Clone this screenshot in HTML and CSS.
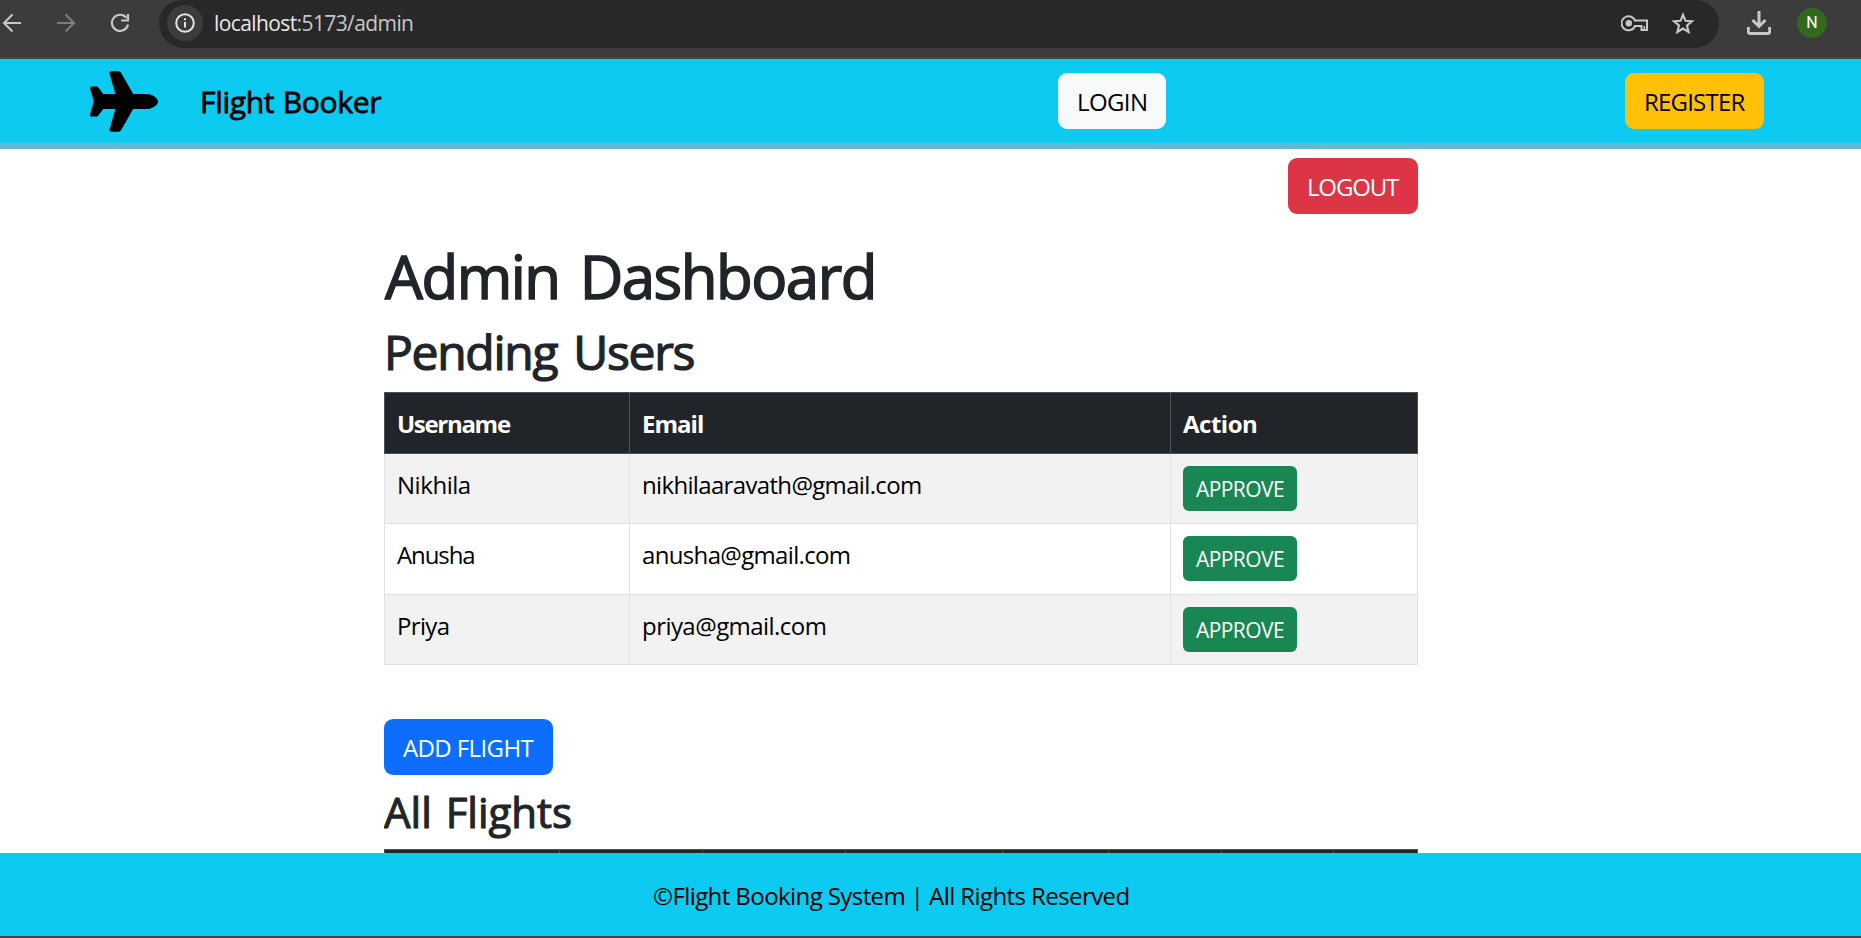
FILE: index.html
```html
<!DOCTYPE html>
<html lang="en">
<head>
<meta charset="utf-8">
<title>Flight Booker</title>
<link rel="stylesheet" href="styles.css">
</head>
<body>
<header class="browser">
  <div class="nav-icons">
    <svg width="20" height="20" viewBox="0 0 20 20" fill="none" stroke="#c8c8c8" stroke-width="2"><path d="M19 10H2M10.500 1.500L2 10l8.500 8.500"/></svg>
    <svg width="20" height="20" viewBox="0 0 20 20" fill="none" stroke="#7e7e7e" stroke-width="2"><path d="M1 10h17M9.500 1.500L18 10l-8.500 8.500"/></svg>
    <svg width="20" height="20" viewBox="0 0 20 20" fill="none" stroke="#c8c8c8" stroke-width="2.200"><path d="M16.400 4.800A8.100 8.100 0 1 0 18 11.500"/><path d="M18 1v6.500h-6.800"/></svg>
  </div>
  <div class="address">
    <span class="info"><svg width="20" height="20" viewBox="0 0 20 20" fill="none" stroke="#e3e3e3" stroke-width="2"><circle cx="10" cy="10" r="8.800"/><path d="M10 9v5.500M10 5.300v2"/></svg></span>
    <span class="url"><b>localhost</b>:5173/admin</span>
    <svg class="key" width="28" height="17" viewBox="0 0 28 17" fill="none" stroke="#c8c8c8" stroke-width="2"><path d="M14 5.600A7 7 0 1 0 14 11h6.500v4h5.500V5.600z"/><path d="M23.300 11v4" stroke-width="1.500"/><circle cx="7.800" cy="8.300" r="3.200" fill="#c8c8c8" stroke="none"/></svg>
    <svg class="star" width="24" height="23" viewBox="0 0 24 23" fill="none" stroke="#c8c8c8" stroke-width="2.100"><path d="M12 2.800l2.500 6 6.500.5-5 4.200 1.600 6.500-5.600-3.500-5.600 3.500 1.600-6.500-5-4.200 6.500-.5z"/></svg>
  </div>
  <svg class="download" width="24" height="24" viewBox="0 0 24 24" fill="none" stroke="#c8c8c8" stroke-width="3"><path d="M12 0v16M5.500 9l6.500 6.500L18.500 9M1.300 16v4.500a2 2 0 0 0 2 2h17.400a2 2 0 0 0 2-2V16"/></svg>
  <span class="avatar">N</span>
</header>

<nav class="navbar">
  <svg class="plane" width="68" height="61" viewBox="0 0 576 512"><path d="M482.300 192c34.200 0 93.700 29 93.700 64c0 36-59.500 64-93.700 64l-116.600 0L265.200 495.900c-5.700 10-16.300 16.100-27.800 16.100l-56.200 0c-10.600 0-18.300-10.200-15.400-20.400l49-171.600L112 320 68.800 377.600c-3 4-7.800 6.400-12.800 6.400l-42 0c-7.800 0-14-6.300-14-14c0-1.300 .2-2.600 .5-3.900L32 256 .5 145.900c-.4-1.300-.5-2.600-.5-3.900c0-7.800 6.300-14 14-14l42 0c5 0 9.800 2.400 12.800 6.400L112 192l102.900 0-49-171.600C162.900 10.200 170.600 0 181.200 0l56.200 0c11.500 0 22.100 6.200 27.800 16.100L365.700 192l116.600 0z"/></svg>
  <span class="brand">Flight Booker</span>
  <button class="btn btn-login">LOGIN</button>
  <button class="btn btn-register">REGISTER</button>
</nav>

<main class="content">
  <button class="btn btn-logout">LOGOUT</button>
  <h1>Admin Dashboard</h1>
  <h2>Pending Users</h2>
  <table class="users">
    <thead><tr><th class="c-user">Username</th><th>Email</th><th class="c-action t-action">Action</th></tr></thead>
    <tbody>
      <tr><td class="t-nikhila">Nikhila</td><td>nikhilaaravath@gmail.com</td><td class="act"><button class="btn-sm">APPROVE</button></td></tr>
      <tr><td class="t-anusha">Anusha</td><td>anusha@gmail.com</td><td class="act"><button class="btn-sm">APPROVE</button></td></tr>
      <tr><td>Priya</td><td class="t-priya">priya@gmail.com</td><td class="act"><button class="btn-sm">APPROVE</button></td></tr>
    </tbody>
  </table>
  <button class="btn btn-add">ADD FLIGHT</button>
  <h3>All Flights</h3>
  <div class="flights-head"><i></i><i></i><i></i><i></i><i></i><i></i><i></i><i></i></div>
</main>

<footer class="footer">©Flight Booking System | All Rights Reserved</footer>
</body>
</html>
```
FILE: styles.css
```css
* { box-sizing: border-box; }
body {
  margin: 0;
  width: 1861px;
  height: 938px;
  overflow: hidden;
  display: flex;
  flex-direction: column;
  background: #fff;
  color: #212529;
  font: 24px/36px "Open Sans", "Noto Sans", sans-serif;
  letter-spacing: -0.66px;
}
svg { display: block; flex: none; }
button { font: inherit; border: 0; margin: 0; display: block; text-align: left; white-space: nowrap; }

.browser {
  flex: none;
  height: 59px;
  background: #3c3c3c;
  border-bottom: 2px solid #474745;
  display: flex;
  align-items: flex-start;
}
.nav-icons { display: flex; gap: 34px; padding: 13px 0 0 2px; width: 159px; }
.address {
  width: 1560px;
  height: 48px;
  background: #282828;
  border-radius: 23px 23px 25px 25px;
  display: flex;
  align-items: center;
  padding: 0 24px 2px 8px;
}
.info { width: 36px; height: 36px; border-radius: 50%; background: #3c3c3c; display: grid; place-items: center; }
.url { margin-left: 11px; flex: 1; font-size: 21px; line-height: 30px; letter-spacing: -0.6px; color: #c7c7c7; }
.url b { font-weight: 400; color: #e8e8e8; }
.star { margin-left: 22px; }
.download { margin: 11px 0 0 28px; }
.avatar {
  width: 30px; height: 30px; margin: 8px 0 0 26px; border-radius: 50%;
  background: #33691e; color: #fff; text-align: center;
  font: 16px/30px Roboto, sans-serif; letter-spacing: 0;
}

.navbar {
  flex: none;
  height: 90px;
  background: #0dcaf0;
  border-bottom: 6px solid #6ab4d6;
  display: flex;
  align-items: center;
  padding: 0 97px 0 90px;
  color: #000;
}
.brand { width: 900px; padding: 1px 0 0 42px; font-size: 30px; letter-spacing: -0.3px; word-spacing: 1px; -webkit-text-stroke: 0.026em; }
.btn { height: 56px; padding: 11px 19px 9px; border-radius: 9px; }
.btn-login { background: #f8f9fa; width: 108px; letter-spacing: -0.59px; }
.btn-register { background: #ffc107; width: 139px; margin-left: auto; letter-spacing: -0.8px; }

.content { flex: 1; min-height: 0; overflow: hidden; width: 1034px; margin-left: 384px; padding-top: 9px; }
.btn-logout { background: #dc3545; color: #fff; width: 130px; margin-left: auto; letter-spacing: -1.16px; }
h1, h2, h3 { margin: 0; font-weight: 400; -webkit-text-stroke: 0.026em; }
h1 { margin-top: 24px; padding: 2px 0 0 1px; height: 84px; font-size: 60px; line-height: 72px; letter-spacing: -1.5px; word-spacing: 6px; }
h2 { padding: 1px 0 0; height: 70px; font-size: 48px; line-height: 57.600px; letter-spacing: -1.3px; word-spacing: 5px; }
h3 { margin-top: 12px; height: 62px; font-size: 42px; line-height: 50.400px; letter-spacing: 0; word-spacing: 3px; }

.users { width: 1034px; border-collapse: collapse; table-layout: fixed; color: #000; }
.users th { height: 61px; background: #212529; color: #fff; border: 1px solid #4d5154; font-weight: 700; text-align: left; padding: 13px 12px 11px; letter-spacing: -1.3px; }
.users th + th { letter-spacing: -0.96px; }
.users td { height: 70px; border: 1px solid #dee2e6; vertical-align: top; padding: 13px 12px 11px; }
.users tbody tr:nth-child(odd) { background: #f2f2f2; }
.users tbody tr:nth-child(2) td { height: 71px; }
.users .c-user { width: 245px; }
.users .c-action { width: 247px; }
.users th.t-action { letter-spacing: -0.5px; }
.users .t-nikhila { letter-spacing: -0.45px; }
.users .t-anusha { letter-spacing: -1.1px; }
.users .t-priya { letter-spacing: -0.55px; }
.users .act { padding: 12px; }
.btn-sm { width: 114px; height: 45px; padding: 8px 13px 5px; border-radius: 6px; background: #198754; color: #fff; font-size: 21px; line-height: 31.500px; letter-spacing: -0.56px; }
.btn-add { background: #0d6efd; color: #fff; width: 169px; margin-top: 54px; letter-spacing: -0.61px; }

.flights-head {
  height: 60px;
  background: #212529;
  border: 1px solid #4d5154;
  display: grid;
  grid-template-columns: 174px 143px 143px 157px 106px 113px 112px 1fr;
}
.flights-head i + i { border-left: 1px solid #4d5154; }

.footer {
  flex: none;
  height: 85px;
  padding: 25px 0 0 653px;
  background: #0dcaf0;
  border-bottom: 2px solid #444;
  color: #000;
  letter-spacing: -0.58px;
}
```
